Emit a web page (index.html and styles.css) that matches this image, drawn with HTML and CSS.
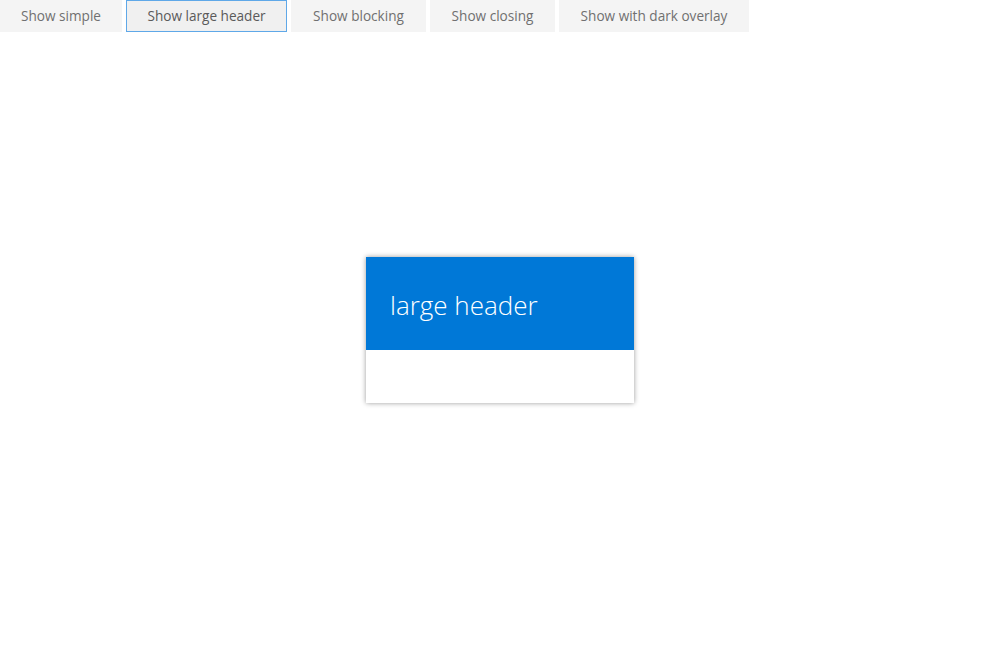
FILE: index.html
```html
<!DOCTYPE html>
<html>
<head>
<meta charset="utf-8">
<link rel="stylesheet" href="styles.css">
</head>
<body>
<div class="toolbar">
  <button class="btn w1">Show simple</button>
  <button class="btn w2 focused">Show large header</button>
  <button class="btn w3">Show blocking</button>
  <button class="btn w4">Show closing</button>
  <button class="btn w5">Show with dark overlay</button>
</div>
<div class="layer">
  <div class="dialog">
    <div class="dialog-header">
      <div class="dialog-title">large header</div>
    </div>
    <div class="dialog-body"></div>
  </div>
</div>
</body>
</html>
```
FILE: styles.css
```css
html, body {
  margin: 0;
  padding: 0;
  background: #ffffff;
  font-family: "Open Sans", "Noto Sans", sans-serif;
}
.toolbar {
  display: flex;
  gap: 4px;
  height: 32px;
}
.btn {
  box-sizing: border-box;
  height: 32px;
  border: 1px solid transparent;
  background: #f4f4f4;
  color: #707070;
  font-family: "Open Sans", "Noto Sans", sans-serif;
  font-size: 13.6px;
  padding: 0;
  text-align: center;
  line-height: 30px;
}
.btn.focused {
  background: #f0f0f0;
  border-color: #5fa8e8;
  color: #5a5a5a;
}
.w1 { width: 122px; }
.w2 { width: 161px; }
.w3 { width: 135px; }
.w4 { width: 125px; }
.w5 { width: 190px; }
.layer {
  position: fixed;
  inset: 0;
  display: flex;
  align-items: center;
  justify-content: center;
}
.dialog {
  width: 268px;
  background: #ffffff;
  box-shadow: 0 0 5px rgba(0, 0, 0, 0.4);
}
.dialog-header {
  box-sizing: border-box;
  height: 93px;
  background: #0078d7;
  padding: 30px 20px 0 24px;
}
.dialog-title {
  color: #ffffff;
  font-family: "Open Sans", "Noto Sans", sans-serif;
  font-weight: 300;
  font-size: 26px;
  line-height: 36px;
}
.dialog-body {
  height: 53px;
}
```
